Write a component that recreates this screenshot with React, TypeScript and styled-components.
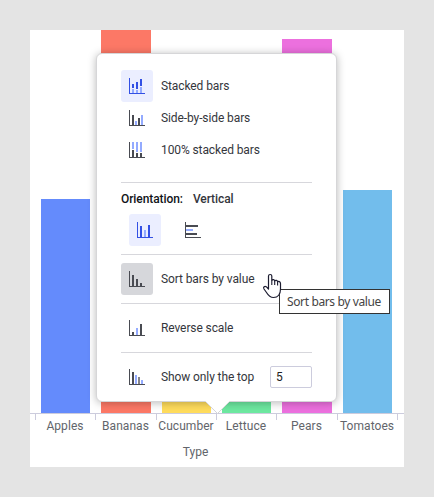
import React from "react";
import styled, { createGlobalStyle } from "styled-components";

const GlobalStyle = createGlobalStyle`
  * { box-sizing: border-box; }
  body { margin: 0; background: #e4e4e4; font-family: Roboto, sans-serif; }
`;

const Page = styled.main`
  width: 434px;
  height: 497px;
  padding: 30px;
  background: #e4e4e4;
`;

const ChartCard = styled.section`
  position: relative;
  width: 374px;
  height: 437px;
  background: #fff;
`;

const bandColumns = "60px 61px 60px 60px 61px 60px";

const Plot = styled.div`
  display: grid;
  grid-template-columns: ${bandColumns};
  align-items: end;
  height: 384px;
  padding: 0 6px 0 5px;
  border-bottom: 1px solid #ccd;
`;

const Bar = styled.div<{ $height: number; $width: number; $color: string }>`
  height: ${(p) => p.$height}px;
  width: ${(p) => p.$width}px;
  margin-left: 6px;
  background: ${(p) => p.$color};
`;

const AxisLabels = styled.div`
  display: grid;
  grid-template-columns: ${bandColumns};
  padding-left: 5px;
`;

const AxisLabel = styled.span<{ $last: boolean }>`
  position: relative;
  display: flex;
  justify-content: center;
  height: 24px;
  font-size: 12px;
  line-height: 24px;
  letter-spacing: 0.05px;
  white-space: nowrap;
  color: #62656b;

  &::before,
  &::after {
    content: "";
    position: absolute;
    top: 0;
    left: 0;
    width: 1px;
    height: 6px;
    background: #ccd;
  }
  &::after {
    display: ${(p) => (p.$last ? "block" : "none")};
    left: 100%;
  }
`;

const AxisTitle = styled.div`
  margin-top: 6px;
  padding-right: 43px;
  text-align: center;
  font-size: 12px;
  line-height: 16px;
  color: #62656b;
`;

const Popover = styled.div`
  position: absolute;
  left: 66px;
  top: 23px;
  width: 241px;
  height: 349px;
  padding: 16px 24px 8px;
  border: 1px solid #d6d6d8;
  border-radius: 6px;
  background: #fff;
  box-shadow: 0 1px 8px rgba(0, 0, 0, 0.28);
`;

const PopoverTail = styled.svg`
  position: absolute;
  left: 108px;
  top: 347px;
  width: 25px;
  height: 13px;
`;

const Option = styled.div`
  display: flex;
  align-items: center;
  height: 32px;
`;

const tones = { plain: "transparent", active: "#ebeeff", pressed: "#d6d7db" };

const IconButton = styled.button<{ $tone: keyof typeof tones }>`
  display: grid;
  place-items: center;
  flex: none;
  width: 32px;
  height: 32px;
  padding: 0;
  border: 0;
  border-radius: 3px;
  background: ${(p) => tones[p.$tone]};
`;

const OptionLabel = styled.span`
  margin-left: 8px;
  font-size: 12px;
  line-height: 16px;
  letter-spacing: -0.1px;
  white-space: nowrap;
  color: #34363c;
`;

const Divider = styled.hr<{ $before?: number; $after?: number }>`
  height: 1px;
  margin: ${(p) => p.$before ?? 8}px 0 ${(p) => p.$after ?? 8}px;
  border: 0;
  background: #d7d7dc;
`;

const OrientationHeading = styled.div`
  display: flex;
  gap: 10px;
  height: 16px;
  font-size: 12px;
  font-weight: 500;
  line-height: 16px;
  letter-spacing: -0.08px;
  color: #111318;
`;

const OrientationValue = styled.span`
  color: #34363c;
`;

const OrientationChoices = styled.div`
  display: flex;
  gap: 16px;
  padding: 7px 8px 0;
`;

const CountInput = styled.input`
  width: 42px;
  height: 22px;
  margin-left: auto;
  padding: 0 5px;
  border: 1px solid #ccd;
  border-radius: 2px;
  font: 12px Roboto, sans-serif;
  color: #222;
`;

const Tooltip = styled.div`
  position: absolute;
  left: 249px;
  top: 259px;
  width: 111px;
  height: 25px;
  padding-left: 7px;
  border: 1px solid #333;
  background: #fff;
  font: 12px/23px "Noto Sans", sans-serif;
  letter-spacing: -0.37px;
  white-space: nowrap;
  color: #444;
`;

const Pointer = styled.svg`
  position: absolute;
  left: 232px;
  top: 243px;
  width: 20px;
  height: 26px;
`;

type IconBar = [x: number, y: number, width: number, height: number, color: string];
const INK = "#494b52";
const BLUE = "#3350e4";
const LIGHT = "#94abff";
const GREY = "#858589";

const icons: Record<string, IconBar[]> = {
  stacked: [[3, 6, 2, 4, BLUE], [3, 11, 2, 4, LIGHT], [7, 4, 2, 7, BLUE], [7, 12, 2, 3, LIGHT], [11, 1, 2, 7, BLUE], [11, 9, 2, 6, LIGHT]],
  side: [[3, 5, 2, 10, INK], [6, 11, 2, 4, LIGHT], [9, 8, 2, 7, INK], [12, 5, 2, 10, LIGHT]],
  full: [[3, 0, 2, 7, LIGHT], [3, 8, 2, 7, INK], [7, 0, 2, 10, LIGHT], [7, 11, 2, 4, INK], [11, 0, 2, 10, LIGHT], [11, 11, 2, 4, INK]],
  vertical: [[3, 4, 2, 11, BLUE], [7, 8, 2, 7, LIGHT], [11, 3, 2, 12, BLUE]],
  horizontal: [[1, 3, 12, 2, INK], [1, 7, 7, 2, LIGHT], [1, 11, 11, 2, INK]],
  sort: [[3, 4, 2, 11, INK], [7, 8, 2, 7, INK], [11, 12, 2, 3, INK]],
  reverse: [[3, 12, 2, 3, INK], [7, 8, 2, 7, LIGHT], [11, 4, 2, 11, INK]],
  top: [[3, 3, 2, 12, INK], [6, 6, 2, 9, LIGHT], [9, 8, 2, 7, GREY], [12, 11, 2, 4, LIGHT]],
};

function ChartIcon({ name, axis = INK }: { name: string; axis?: string }) {
  return (
    <svg width="16" height="16" viewBox="0 0 16 16" shapeRendering="crispEdges">
      <path d="M0 0h1v15h15v1H0z" fill={axis} />
      {icons[name].map(([x, y, width, height, color], i) => (
        <rect key={i} x={x} y={y} width={width} height={height} fill={color} />
      ))}
    </svg>
  );
}

const data = [
  { label: "Apples", height: 214, width: 49, color: "#648bfc" },
  { label: "Bananas", height: 383, width: 50, color: "#fc7866" },
  { label: "Cucumber", height: 140, width: 49, color: "#ffdc5c" },
  { label: "Lettuce", height: 90, width: 49, color: "#6de8a0" },
  { label: "Pears", height: 374, width: 50, color: "#ec70de" },
  { label: "Tomatoes", height: 223, width: 49, color: "#72bdec" },
];

export default function App() {
  return (
    <Page>
      <GlobalStyle />
      <ChartCard>
        <Plot>
          {data.map((d) => (
            <Bar key={d.label} $height={d.height} $width={d.width} $color={d.color} />
          ))}
        </Plot>
        <AxisLabels>
          {data.map((d, i) => (
            <AxisLabel key={d.label} $last={i === data.length - 1}>{d.label}</AxisLabel>
          ))}
        </AxisLabels>
        <AxisTitle>Type</AxisTitle>

        <Popover>
          <Option>
            <IconButton $tone="active"><ChartIcon name="stacked" axis={BLUE} /></IconButton>
            <OptionLabel>Stacked bars</OptionLabel>
          </Option>
          <Option>
            <IconButton $tone="plain"><ChartIcon name="side" /></IconButton>
            <OptionLabel>Side-by-side bars</OptionLabel>
          </Option>
          <Option>
            <IconButton $tone="plain"><ChartIcon name="full" /></IconButton>
            <OptionLabel>100% stacked bars</OptionLabel>
          </Option>
          <Divider $before={16} />
          <OrientationHeading>
            Orientation: <OrientationValue>Vertical</OrientationValue>
          </OrientationHeading>
          <OrientationChoices>
            <IconButton $tone="active"><ChartIcon name="vertical" axis={BLUE} /></IconButton>
            <IconButton $tone="plain"><ChartIcon name="horizontal" /></IconButton>
          </OrientationChoices>
          <Divider />
          <Option>
            <IconButton $tone="pressed"><ChartIcon name="sort" /></IconButton>
            <OptionLabel>Sort bars by value</OptionLabel>
          </Option>
          <Divider />
          <Option>
            <IconButton $tone="plain"><ChartIcon name="reverse" /></IconButton>
            <OptionLabel>Reverse scale</OptionLabel>
          </Option>
          <Divider />
          <Option>
            <IconButton $tone="plain"><ChartIcon name="top" /></IconButton>
            <OptionLabel>Show only the top</OptionLabel>
            <CountInput defaultValue="5" />
          </Option>
          <PopoverTail viewBox="0 0 25 13">
            <path d="M0 0h25L12.5 12.5z" fill="#fff" />
            <path d="M.5 .5l12 12 12-12" fill="none" stroke="#d6d6d8" />
          </PopoverTail>
        </Popover>

        <Tooltip>Sort bars by value</Tooltip>
        <Pointer viewBox="0 0 20 26">
          <path
            d="M6.500 16V3C6.500 1 9.800 1 9.800 3V7.500C10.500 6 12.700 6.400 12.700 8C13.500 6.800 15.600 7.200 15.600 8.900C16.500 7.900 18.500 8.600 18.500 10.500V16C18.500 21 16 24.500 11.500 24.500C7.500 24.500 6 22 4.500 19.500L2 16C.8 14 2.800 12.600 4.200 13.700Z"
            fill="#fff"
            stroke="#1c1c30"
            strokeWidth="1.200"
            strokeLinejoin="round"
          />
          <path d="M9.800 7.500V12M12.700 8V12M15.600 8.900V12.500" stroke="#1c1c30" strokeWidth="1.100" />
        </Pointer>
      </ChartCard>
    </Page>
  );
}
